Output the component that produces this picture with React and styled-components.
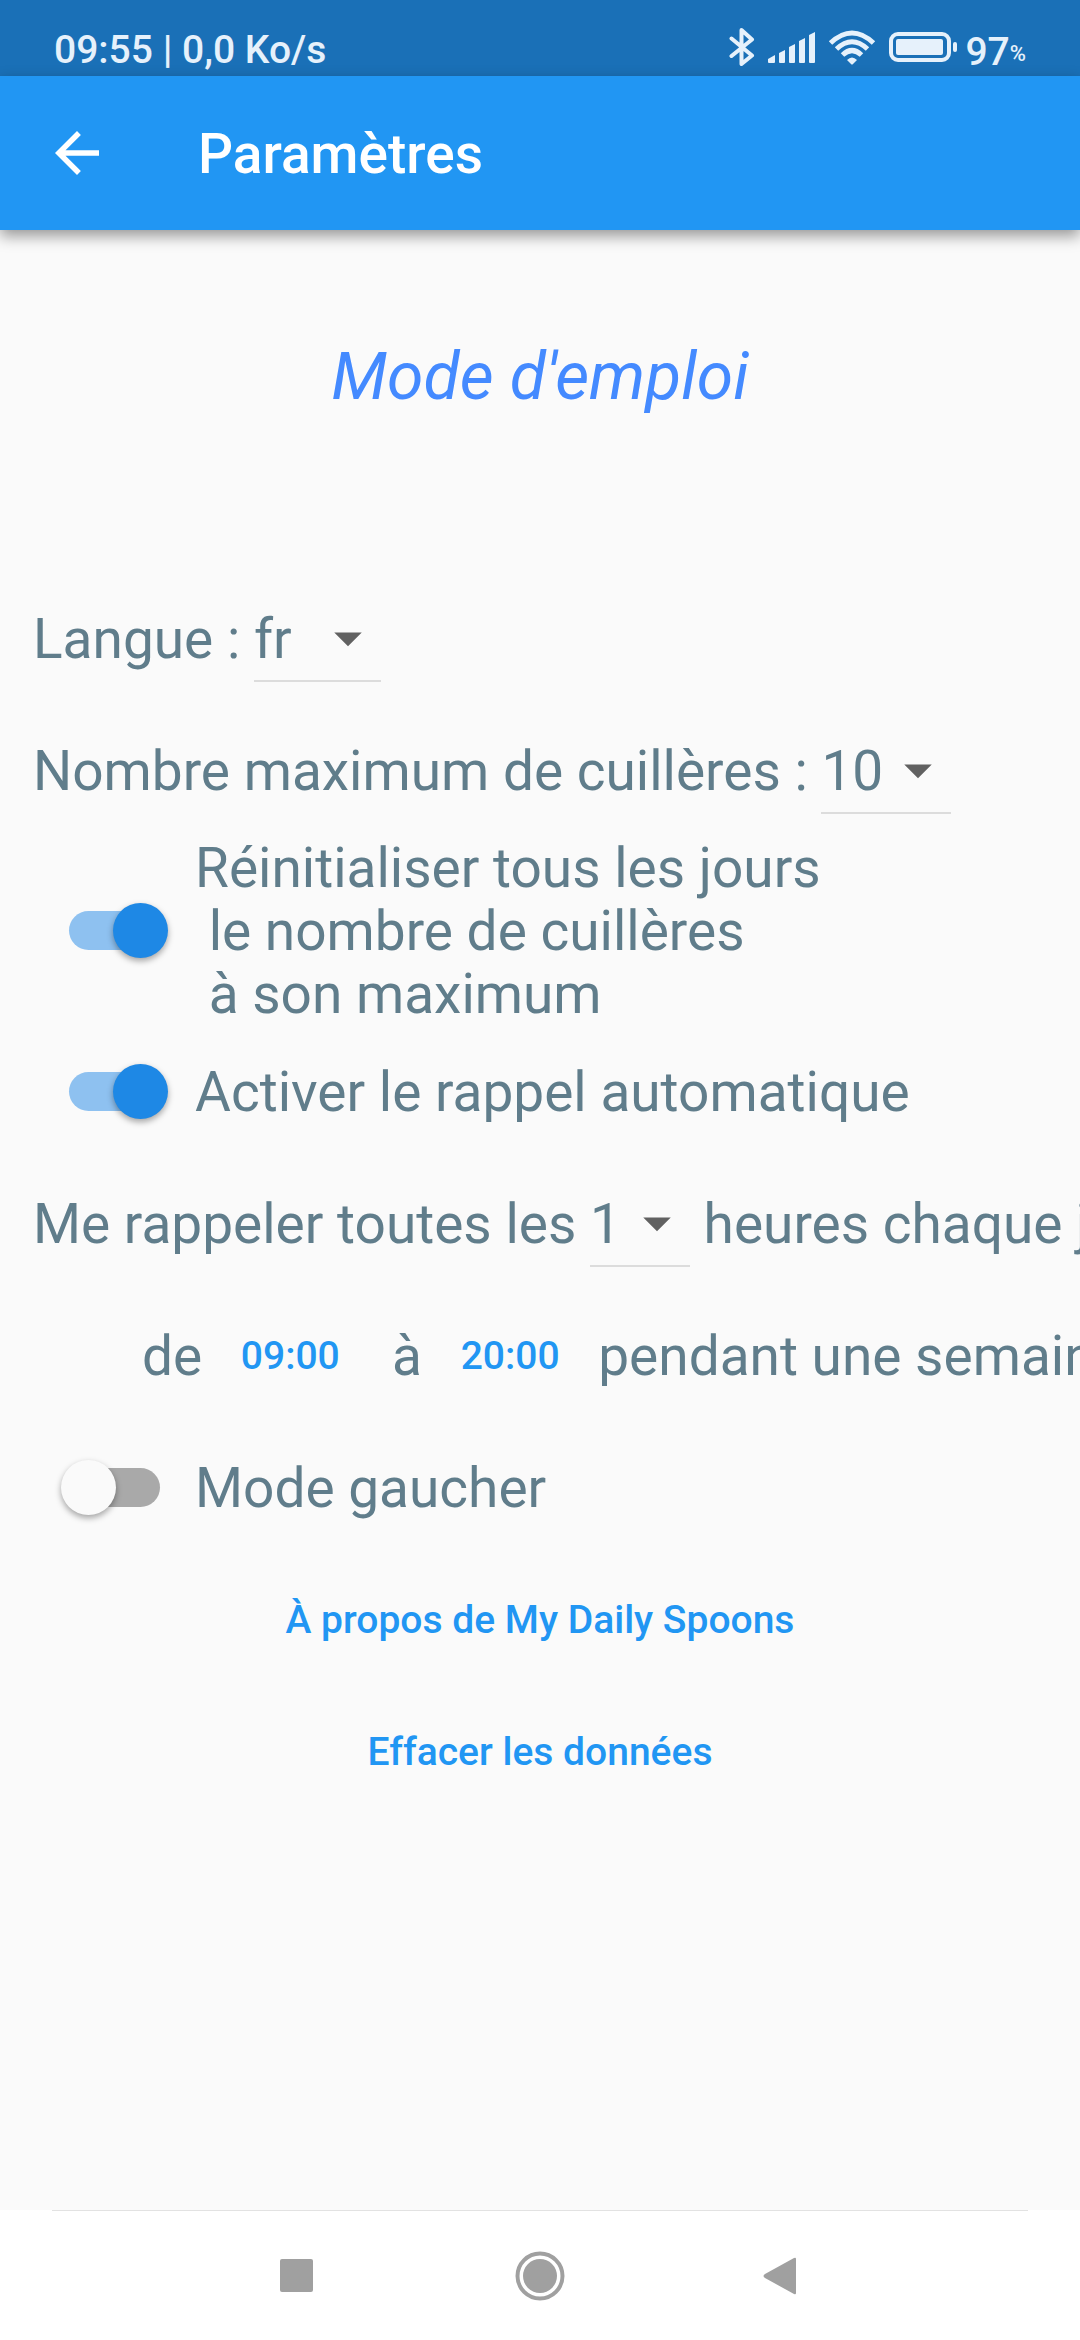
import React, { useState } from "react";
import styled, { createGlobalStyle } from "styled-components";

const GlobalStyle = createGlobalStyle`
  * { box-sizing: border-box; }
  body { margin: 0; background: #fafafa; }
  button, select, input { font-family: inherit; margin: 0; }
`;

const Screen = styled.div`
  min-height: 100vh;
  display: flex;
  flex-direction: column;
  overflow: hidden;
  background: #fafafa;
  color: #607d8b;
  font-family: Roboto, "Liberation Sans", sans-serif;
  font-size: 55px;
  line-height: 63px;
`;

const StatusBar = styled.div`
  display: flex;
  align-items: center;
  justify-content: space-between;
  height: 76px;
  padding: 20px 54px 0 54px;
  background: #1a70b7;
  color: #e6f1fb;
  font-size: 39px;
  font-weight: 500;
  line-height: 56px;
`;

const Clock = styled.span`
  padding-top: 4px;
`;

const StatusIcons = styled.div`
  display: flex;
  align-items: center;
  gap: 12px;
  svg { display: block; fill: currentColor; }
`;

const Battery = styled.div`
  display: flex;
  align-items: center;
  gap: 8px;
`;

const Percent = styled.span`
  padding-top: 8px;
  small { font-size: 22px; line-height: 0; vertical-align: 4px; }
`;

const AppBar = styled.header`
  display: flex;
  align-items: center;
  gap: 44px;
  height: 154px;
  background: #2196f3;
  color: #ffffff;
  box-shadow: 0 6px 14px rgba(0, 0, 0, 0.4);
`;

const BackButton = styled.button`
  display: grid;
  place-items: center;
  width: 154px;
  height: 154px;
  padding: 0;
  border: 0;
  background: none;
  color: inherit;
  svg { width: 66px; height: 66px; fill: currentColor; }
`;

const Title = styled.h1`
  margin: 0;
  padding-top: 2px;
  font-size: 55px;
  font-weight: 500;
`;

const Content = styled.main`
  flex: 1;
  display: flex;
  flex-direction: column;
`;

const Manual = styled.div`
  display: flex;
  justify-content: center;
  padding: 108px 33px 157px;
`;

const ManualLink = styled.a`
  color: #448aff;
  font-size: 66px;
  font-style: italic;
  line-height: 78px;
  text-decoration: none;
`;

const Row = styled.div`
  display: flex;
  align-items: center;
  min-height: ${(p) => (p.$tall ? "189px" : "132px")};
  padding-left: ${(p) => (p.$indent ? "142px" : "33px")};
  white-space: pre;
`;

const Label = styled.label`
  flex: none;
`;

const Text = styled.span`
  flex: none;
`;

const SelectBox = styled.span`
  flex: none;
  display: grid;
  grid-template-columns: 1fr 66px;
  align-items: center;
  width: ${(p) => p.$width};
  height: 86px;
  border-bottom: 2px solid #dcdcdc;
  svg { grid-area: 1 / 2; width: 66px; height: 66px; fill: #616161; pointer-events: none; }
`;

const Select = styled.select`
  grid-area: 1 / 1 / 2 / 3;
  width: 100%;
  height: 84px;
  padding: 2px 0 0;
  border: 0;
  appearance: none;
  background: none;
  color: inherit;
  font-size: 55px;
`;

const Switch = styled.input`
  appearance: none;
  flex: none;
  display: flex;
  align-items: center;
  width: 91px;
  height: 39px;
  && { margin: 0 35px 2px 36px; }
  border-radius: 20px;
  background: #a9a9a9;
  &::before {
    content: "";
    flex: none;
    width: 55px;
    height: 55px;
    margin-left: -8px;
    border-radius: 50%;
    background: #fafafa;
    box-shadow: 0 3px 6px rgba(0, 0, 0, 0.35);
  }
  &:checked { background: #8ec1f0; }
  &:checked::before { margin-left: 44px; background: #1e88e5; }
`;

const TextButton = styled.button`
  flex: none;
  padding: 0 25px;
  border: 0;
  background: none;
  color: #2196f3;
  font-size: 39px;
  font-weight: 500;
  line-height: 63px;
`;

const Actions = styled.div`
  display: flex;
  flex-direction: column;
  align-items: center;
  button { height: 132px; }
`;

const NavBar = styled.nav`
  display: flex;
  flex-direction: column;
  height: 130px;
  background: #ffffff;
`;

const Divider = styled.hr`
  align-self: stretch;
  height: 1px;
  margin: 0 52px;
  border: 0;
  background: #e2e2e2;
`;

const NavButtons = styled.div`
  flex: 1;
  display: flex;
  align-items: center;
  justify-content: center;
  gap: 144px;
`;

const NavButton = styled.button`
  width: 100px;
  height: 100px;
  padding: 0;
  border: 0;
  background: none;
  color: #a0a0a0;
  svg { display: block; width: 100px; height: 100px; fill: currentColor; }
`;

function Dropdown({ id, width, options, initial, label }) {
  const [value, setValue] = useState(initial);
  return (
    <SelectBox $width={width}>
      <Select id={id} aria-label={label} value={value} onChange={(e) => setValue(e.target.value)}>
        {options.map((o) => (
          <option key={o} value={o}>{o}</option>
        ))}
      </Select>
      <svg viewBox="0 0 24 24" aria-hidden="true"><path d="M7 10l5 5 5-5z" /></svg>
    </SelectBox>
  );
}

function SwitchRow({ id, checked, tall, children }) {
  return (
    <Row $tall={tall}>
      <Switch type="checkbox" role="switch" id={id} defaultChecked={checked} />
      <Label htmlFor={id}>{children}</Label>
    </Row>
  );
}

export default function App() {
  return (
    <Screen>
      <GlobalStyle />
      <StatusBar>
        <Clock>09:55 | 0,0 Ko/s</Clock>
        <StatusIcons>
          <svg width="26" height="40" viewBox="0 0 26 40" aria-hidden="true">
            <path d="M2.500 10.500L23 27.500L12.500 36V2L23 11.500L2.500 28" style={{ fill: "none" }} stroke="currentColor" strokeWidth="4" strokeLinejoin="round" strokeLinecap="round" />
          </svg>
          <svg width="49" height="40" viewBox="0 0 49 40" aria-hidden="true">
            <path d="M1 31l7-4v7q0 1-1 1H2q-1 0-1-1zM12 25l6-3v12q0 1-1 1h-4q-1 0-1-1zM22 19l6-3v18q0 1-1 1h-4q-1 0-1-1zM32 13l6-3v24q0 1-1 1h-4q-1 0-1-1zM42 7l6-3v30q0 1-1 1h-4q-1 0-1-1z" />
          </svg>
          <svg width="48" height="40" viewBox="0 0 48 40" aria-hidden="true">
            <g style={{ fill: "none" }} stroke="currentColor" strokeWidth="5">
              <path d="M2.500 15Q24-5 45.500 15" />
              <path d="M8.500 21Q24 6.500 39.500 21" />
              <path d="M14.500 27Q24 18 33.500 27" />
            </g>
            <path d="M19 32q5-5 10 0l-4 4q-1 1-2 0z" />
          </svg>
          <Battery>
            <svg width="69" height="34" viewBox="0 0 69 34" aria-hidden="true">
              <rect x="3" y="3" width="58" height="26" rx="7" style={{ fill: "none" }} stroke="currentColor" strokeWidth="4" />
              <rect x="8" y="8" width="47" height="16" rx="2" />
              <rect x="65" y="11" width="4" height="10" rx="2" />
            </svg>
            <Percent>97<small>%</small></Percent>
          </Battery>
        </StatusIcons>
      </StatusBar>

      <AppBar>
        <BackButton aria-label="Retour">
          <svg viewBox="0 0 24 24"><path d="M20 11H7.830l5.590-5.590L12 4l-8 8 8 8 1.410-1.410L7.830 13H20v-2z" /></svg>
        </BackButton>
        <Title>Paramètres</Title>
      </AppBar>

      <Content>
        <Manual>
          <ManualLink href="#mode-emploi">Mode d'emploi</ManualLink>
        </Manual>

        <Row>
          <Label htmlFor="langue">{"Langue : "}</Label>
          <Dropdown id="langue" width="127px" options={["fr", "en"]} initial="fr" />
        </Row>
        <Row>
          <Label htmlFor="maximum">{"Nombre maximum de cuillères : "}</Label>
          <Dropdown id="maximum" width="130px" options={["5", "10", "12", "15", "20"]} initial="10" />
        </Row>
        <SwitchRow id="reset" checked tall>
          {"Réinitialiser tous les jours\n le nombre de cuillères\n à son maximum"}
        </SwitchRow>
        <SwitchRow id="rappel" checked>Activer le rappel automatique</SwitchRow>
        <Row>
          <Label htmlFor="heures">{"Me rappeler toutes les "}</Label>
          <Dropdown id="heures" width="100px" options={["1", "2", "3", "4"]} initial="1" />
          <Text>{" heures chaque jour"}</Text>
        </Row>
        <Row $indent>
          <Text>{"de "}</Text>
          <TextButton>09:00</TextButton>
          <Text>{"  à "}</Text>
          <TextButton>20:00</TextButton>
          <Text>{" pendant une semaine"}</Text>
        </Row>
        <SwitchRow id="gaucher">Mode gaucher</SwitchRow>
        <Actions>
          <TextButton>À propos de My Daily Spoons</TextButton>
          <TextButton>Effacer les données</TextButton>
        </Actions>
      </Content>

      <NavBar>
        <Divider />
        <NavButtons>
          <NavButton aria-label="Applications récentes">
            <svg viewBox="0 0 100 100"><rect x="34" y="33" width="33" height="33" rx="2" /></svg>
          </NavButton>
          <NavButton aria-label="Accueil">
            <svg viewBox="0 0 100 100">
              <circle cx="50" cy="50" r="22.500" style={{ fill: "none" }} stroke="currentColor" strokeWidth="4" />
              <circle cx="50" cy="50" r="17" />
            </svg>
          </NavButton>
          <NavButton aria-label="Retour">
            <svg viewBox="0 0 100 100"><path d="M31 48L60 32q2-1 2 1v34q0 2-2 1L31 52q-3-2 0-4z" /></svg>
          </NavButton>
        </NavButtons>
      </NavBar>
    </Screen>
  );
}
